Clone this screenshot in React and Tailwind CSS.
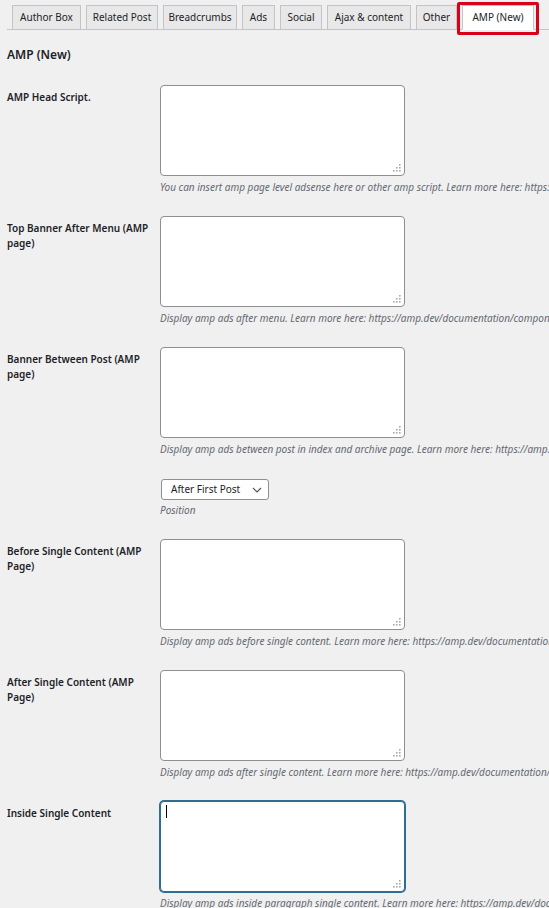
const tabs = [
  { name: 'Author Box', w: 'w-[69px]' },
  { name: 'Related Post', w: 'w-[72px]' },
  { name: 'Breadcrumbs', w: 'w-[74px]' },
  { name: 'Ads', w: 'w-[33px]' },
  { name: 'Social', w: 'w-[42px]' },
  { name: 'Ajax & content', w: 'w-[84px]' },
  { name: 'Other', w: 'w-[41px]' },
  { name: 'AMP (New)', w: 'w-[72px]', active: true },
]

const rows = [
  {
    label: 'AMP Head Script.',
    desc: 'You can insert amp page level adsense here or other amp script. Learn more here: https://amp.dev/documentation/components/amp-ad/',
  },
  {
    label: 'Top Banner After Menu (AMP page)',
    desc: 'Display amp ads after menu. Learn more here: https://amp.dev/documentation/components/amp-ad/',
  },
  {
    label: 'Banner Between Post (AMP page)',
    desc: 'Display amp ads between post in index and archive page. Learn more here: https://amp.dev/documentation/components/amp-ad/',
    select: true,
  },
  {
    label: 'Before Single Content (AMP Page)',
    desc: 'Display amp ads before single content. Learn more here: https://amp.dev/documentation/components/amp-ad/',
  },
  {
    label: 'After Single Content (AMP Page)',
    desc: 'Display amp ads after single content. Learn more here: https://amp.dev/documentation/components/amp-ad/',
  },
  {
    label: 'Inside Single Content',
    desc: 'Display amp ads inside paragraph single content. Learn more here: https://amp.dev/documentation/components/amp-ad/',
    focused: true,
  },
]

function Grip() {
  return (
    <svg width="8" height="8" viewBox="0 0 8 8" className="absolute right-[4px] bottom-[4px]">
      <rect x="6" y="0" width="1.6" height="1.6" fill="#a7aaad" />
      <rect x="3" y="3" width="1.6" height="1.6" fill="#a7aaad" />
      <rect x="6" y="3" width="1.6" height="1.6" fill="#a7aaad" />
      <rect x="0" y="6" width="1.6" height="1.6" fill="#a7aaad" />
      <rect x="3" y="6" width="1.6" height="1.6" fill="#a7aaad" />
      <rect x="6" y="6" width="1.6" height="1.6" fill="#a7aaad" />
    </svg>
  )
}

function Field({ focused }) {
  return (
    <div className="relative w-[245px] h-[91px]">
      <textarea
        readOnly
        className={
          'block w-full h-full resize-none rounded-[4px] bg-white outline-none ' +
          (focused ? 'border border-[#2c6f93] shadow-[0_0_0_1px_#2c6f93]' : 'border border-[#8c8f94]')
        }
      />
      {focused && <span className="absolute left-[6px] top-[4px] w-px h-[13px] bg-black" />}
      <Grip />
    </div>
  )
}

export default function App() {
  return (
    <div
      className="min-h-screen w-full overflow-hidden bg-[#f0f0f1] text-[#1d2327]"
      style={{ fontFamily: '"Noto Sans", "Open Sans", sans-serif' }}
    >
      <div className="pt-[5px] pl-[7px]">
        <div className="flex gap-[5px] pl-[5px] border-b border-[#c3c4c7] h-[25px]">
          {tabs.map(t => (
            <div
              key={t.name}
              className={
                'relative h-[25px] shrink-0 flex items-center justify-center text-[10px] whitespace-nowrap border border-[#c3c4c7] ' +
                t.w +
                (t.active ? ' bg-white border-b-white' : ' bg-[#e8e8e9]')
              }
            >
              {t.name}
              {t.active && (
                <span className="absolute -left-[6px] -right-[6px] -top-[4px] -bottom-[6px] border-[3px] border-[#d9001b] rounded-[2px]" />
              )}
            </div>
          ))}
        </div>
      </div>

      <h2 className="pl-[7px] mt-[17px] text-[12px] font-semibold leading-[16px]">AMP (New)</h2>

      <div className="mt-[22px]">
        {rows.map(r => (
          <div key={r.label} className="flex pb-[22px]">
            <div className="w-[160px] shrink-0 pl-[7px] pr-[5px] pt-[5px] text-[10px] font-semibold leading-[15px]">
              {r.label}
            </div>
            <div className="flex flex-col">
              <Field focused={r.focused} />
              <p className="mt-[4px] text-[10px] italic leading-[14px] text-[#646970] whitespace-nowrap">{r.desc}</p>
              {r.select && (
                <>
                  <div className="mt-[23px] ml-[1px] w-[108px] h-[21px] rounded-[3px] border border-[#8c8f94] bg-white flex items-center justify-between pl-[9px] pr-[6px] text-[10px]">
                    <span>After First Post</span>
                    <svg width="10" height="6" viewBox="0 0 10 6" fill="none">
                      <path d="M1 1l4 4 4-4" stroke="#50575e" strokeWidth="1.2" />
                    </svg>
                  </div>
                  <p className="mt-[3px] text-[10px] italic leading-[14px] text-[#646970]">Position</p>
                </>
              )}
            </div>
          </div>
        ))}
      </div>
    </div>
  )
}
